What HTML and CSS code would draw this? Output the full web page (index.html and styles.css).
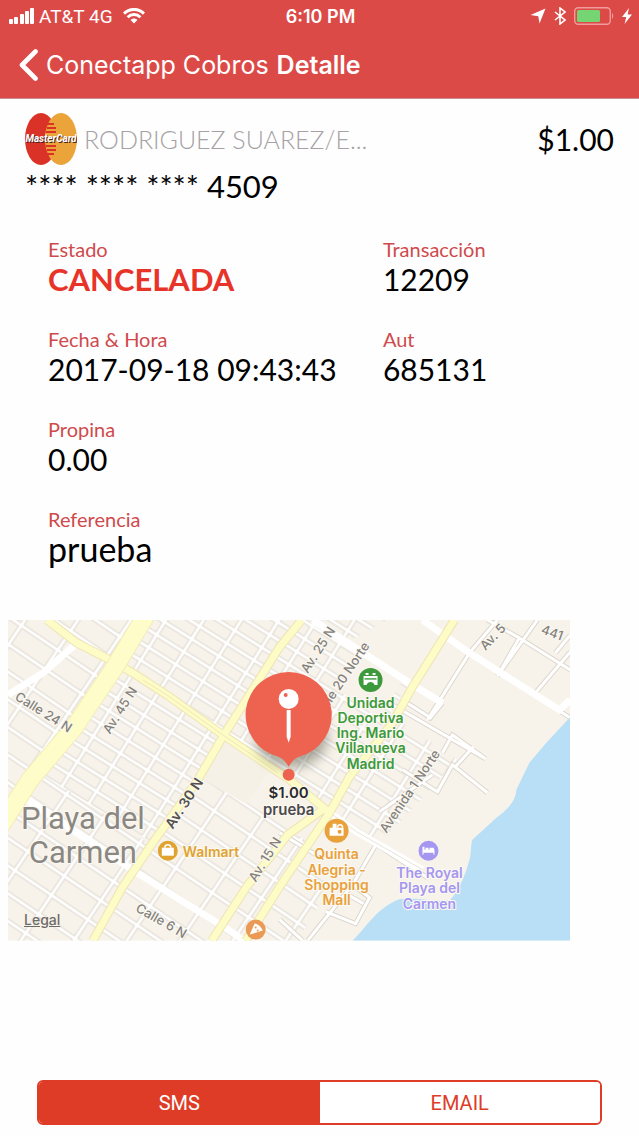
FILE: index.html
```
<!DOCTYPE html>
<html lang="es">
<head>
    <meta charset="UTF-8">
    <meta name="viewport" content="width=device-width, initial-scale=1.0">
    <title>Detalle</title>
    <link rel="stylesheet" href="styles.css">
</head>
<body>
    <header class="header">
        <!-- Status bar -->
        <div class="status-bar">
            <div class="status-left">
                <svg width="26" height="16" viewBox="0 0 26 16" fill="#fff">
                    <rect x="0" y="11" width="4" height="5" rx="1"/>
                    <rect x="5" y="9" width="4" height="7" rx="1"/>
                    <rect x="11" y="6" width="4" height="10" rx="1"/>
                    <rect x="16" y="3" width="4" height="13" rx="1"/>
                    <rect x="21" y="0" width="4" height="16" rx="1"/>
                </svg>
                <span class="carrier">AT&amp;T 4G</span>
                <svg width="22" height="16" viewBox="0 0 22 16" fill="none" stroke="#fff" stroke-width="3">
                    <path d="M1 5.6C6.6 0 15.4 0 21 5.6"/>
                    <path d="M4.6 9.2C8.2 5.6 13.8 5.6 17.4 9.2"/>
                    <path d="M7.6 12C9.5 10 12.5 10 14.4 12L11 15.6Z" fill="#fff" stroke="none"/>
                </svg>
            </div>
            <span class="time">6:10 PM</span>
            <div class="status-right">
                <svg width="16" height="16" viewBox="0 0 16 16" fill="#fff">
                    <path d="M15.5 0.5L9.5 15.5L8.3 8.2L0.5 7Z"/>
                </svg>
                <svg width="12" height="18" viewBox="0 0 12 18" fill="none" stroke="#fff" stroke-width="1.6">
                    <path d="M1 5L11 13L6 17V1L11 5L1 13"/>
                </svg>
                <svg width="40" height="18" viewBox="0 0 40 18">
                    <rect x="0.7" y="0.7" width="35.6" height="16.6" rx="3.5" fill="none" stroke="#f09c9a" stroke-width="1.4"/>
                    <rect x="3" y="3" width="23" height="12" rx="1.5" fill="#75d572"/>
                    <path d="M38 6C39.6 7 39.6 11 38 12Z" fill="#f09c9a"/>
                </svg>
                <svg width="10" height="16" viewBox="0 0 10 16" fill="#fff">
                    <path d="M7 0L0 9H4.2L2.6 16L10 6.4H5.6Z"/>
                </svg>
            </div>
        </div>
        <!-- Navigation -->
        <nav class="nav-bar">
            <a href="#" class="back">
                <svg width="20" height="34" viewBox="0 0 20 34" fill="none" stroke="#fff" stroke-width="4.6" stroke-linecap="round" stroke-linejoin="round">
                    <path d="M16.5 3.5L3 17L16.5 30.5"/>
                </svg>
                <span>Conectapp Cobros</span>
            </a>
            <h1>Detalle</h1>
        </nav>
    </header>

    <main class="content">
        <section class="card-info">
            <div class="card-row">
                <svg class="card-logo" width="52" height="54" viewBox="0 0 52 54">
                    <ellipse cx="16" cy="27" rx="16" ry="26" fill="#da3226"/>
                    <ellipse cx="36" cy="27" rx="16" ry="26" fill="#eaa43a"/>
                    <path d="M21 12H29M22 16H31M21 20H31M21 34H31M22 38H31M21 42H29" stroke="#da3226" stroke-width="2"/>
                    <path d="M26 14H23M26 18H22M26 36H22M26 40H23" stroke="#eaa43a" stroke-width="1"/>
                    <text class="logo-text" x="26" y="30" text-anchor="middle">MasterCard</text>
                </svg>
                <span class="holder">RODRIGUEZ SUAREZ/E...</span>
                <span class="amount">$1.00</span>
            </div>
            <p class="card-number">**** **** **** 4509</p>
        </section>

        <dl class="details">
            <div class="detail">
                <dt>Estado</dt>
                <dd class="cancelled">CANCELADA</dd>
            </div>
            <div class="detail">
                <dt>Transacción</dt>
                <dd>12209</dd>
            </div>
            <div class="detail">
                <dt>Fecha &amp; Hora</dt>
                <dd>2017-09-18 09:43:43</dd>
            </div>
            <div class="detail">
                <dt>Aut</dt>
                <dd>685131</dd>
            </div>
            <div class="detail full">
                <dt>Propina</dt>
                <dd>0.00</dd>
            </div>
            <div class="detail full">
                <dt>Referencia</dt>
                <dd class="reference">prueba</dd>
            </div>
        </dl>

        <!-- Map -->
        <div class="map">
            <svg class="map-svg" viewBox="0 0 563 321">
                <defs>
                    <pattern id="blocks" width="32" height="15" patternUnits="userSpaceOnUse" patternTransform="translate(125 53) rotate(32)">
                        <path d="M0 0H32M0 0V15M32 0V15M0 15H32" stroke="#ddd7cd" stroke-width="5"/>
                        <path d="M0 0H32M0 0V15M32 0V15M0 15H32" stroke="#fff" stroke-width="3"/>
                    </pattern>
                    <pattern id="bigBlocks" width="44" height="23" patternUnits="userSpaceOnUse" patternTransform="translate(22 150) rotate(34)">
                        <path d="M0 0H44M0 0V23M44 0V23M0 23H44" stroke="#ddd7cd" stroke-width="5"/>
                        <path d="M0 0H44M0 0V23M44 0V23M0 23H44" stroke="#fff" stroke-width="3"/>
                    </pattern>
                    <filter id="soft" x="-50%" y="-50%" width="200%" height="200%">
                        <feGaussianBlur stdDeviation="6"/>
                    </filter>
                </defs>

                <rect width="563" height="321" fill="#f7f3eb"/>

                <!-- street grid -->
                <path d="M139 0H294L215 117L125 53L107 47Z" fill="url(#blocks)"/>
                <path d="M107 47L215 117L190 160L145 223L22 150Z" fill="url(#blocks)"/>
                <path d="M29 150L140 223L85 321H0V195Z" fill="url(#bigBlocks)"/>
                <path d="M294 0H305L402 63L342 157L322 193L215 117Z" fill="url(#blocks)"/>
                <path d="M0 0H139L107 47L22 160L0 195Z" fill="url(#bigBlocks)"/>
                <path d="M190 150L300 222L238 321H85L145 223Z" fill="url(#bigBlocks)"/>
                <path d="M385 96L450 140L372 224L322 193Z" fill="url(#blocks)"/>
                <path d="M305 0H380L340 22Z" fill="url(#blocks)"/>
                <path d="M300 228L282 260L238 321H290L320 270Z" fill="url(#bigBlocks)"/>
                <path d="M217 122L262 152L238 184L193 158Z" fill="#f6f1e7"/>
                <path d="M318 4L396 59L372 99L330 70L352 30Z" fill="#f7f3eb"/>

                <g class="street-edge">
                    <path id="streets" d="M462 33L420 100M462 33L490 0M439 17L563 98M490 56L512 18L563 50M512 18L480 0M528 73L563 32M548 33L563 15M530 0L490 56M385 85L478 139M435 83L423 98L395 80M435 133L445 115L478 139M447 148L466 127M372 192L425 155M395 150L430 172L445 145L480 173M349 212L420 258M369 224L345 265L300 321M345 265L362 278L348 304L318 292M340 275L356 284M272 213L310 236M272 300L295 321"/>
                </g>
                <use href="#streets" class="street"/>

                <path class="white-road" d="M305 0L402 63L435 83M415 0L439 17L462 33L552 90L563 80M0 75L35 53L69 23M12 176L75 217L129 253L225 313L236 321M322 193L349 212L415 250"/>
                <path d="M322 193L349 212L415 250" fill="none" stroke="#e8e2da"/>

                <!-- avenues -->
                <g class="avenue-edge">
                    <path id="avenues" d="M39 0L69 23L102 40L125 53L159 75L215 115L282 160L322 193M294 0L272 27L215 117L190 160L145 223L115 267L85 321M447 0L405 67L385 103L342 157L322 193L299 227L272 267L238 321M315 190L280 215L239 267L204 321"/>
                </g>
                <use href="#avenues" class="avenue"/>
                <path d="M139 -6L107 47L66 108L22 160L-8 207" fill="none" stroke="#f3ecb8" stroke-width="19"/>
                <path d="M139 -6L107 47L66 108L22 160L-8 207" fill="none" stroke="#fefdc9" stroke-width="17"/>
                <path d="M135 60L159 75L215 115L270 153" fill="none" stroke="#f0e7b5"/>

                <!-- sea -->
                <path d="M563 97L539 123L522 143L509 170C508 185 495 193 489 198L465 220C463 225 464 235 462 240C458 255 452 270 443 280C425 284 398 274 386 282C368 291 358 308 345 321H563Z" fill="#b8dff5"/>

                <!-- street names -->
                <g class="street-name">
                    <text transform="translate(6 79) rotate(32)">Calle 24 N</text>
                    <text transform="translate(102 115) rotate(-58)">Av. 45 N</text>
                    <text transform="translate(300 54) rotate(-57)">Av. 25 N</text>
                    <text transform="translate(322 86) rotate(-56)">lle 20 Norte</text>
                    <text transform="translate(478 31) rotate(-46)">Av. 5</text>
                    <text transform="translate(533 13) rotate(20)">441</text>
                    <text transform="translate(379 214) rotate(-56)">Avenida 1 Norte</text>
                    <text transform="translate(248 263) rotate(-58)">Av. 15 N</text>
                    <text transform="translate(127 291) rotate(30)">Calle 6 N</text>
                    <text class="strong" transform="translate(165 210) rotate(-57)">Av. 30 N</text>
                </g>

                <text class="city" x="75" y="209" text-anchor="middle">Playa del</text>
                <text class="city" x="75" y="243" text-anchor="middle">Carmen</text>

                <!-- places -->
                <g class="place sport" text-anchor="middle">
                    <circle cx="363" cy="60" r="12"/>
                    <path d="M356 56H370V65H367C366 61 360 61 359 65H356ZM358 53H361V55H358ZM365 53H368V55H365Z" fill="#fff"/>
                    <path d="M357 59H369" stroke="#43a047" stroke-width="1.5"/>
                    <text x="363" y="88">Unidad</text>
                    <text x="363" y="103">Deportiva</text>
                    <text x="363" y="118">Ing. Mario</text>
                    <text x="363" y="133">Villanueva</text>
                    <text x="363" y="149">Madrid</text>
                </g>
                <g class="place shop">
                    <circle cx="160" cy="231" r="10"/>
                    <path d="M154 228H166V236H154Z" fill="#fff"/>
                    <path d="M157 228C157 224 163 224 163 228" fill="none" stroke="#fff" stroke-width="1.5"/>
                    <text x="175" y="237">Walmart</text>
                </g>
                <g class="place mall" text-anchor="middle">
                    <circle cx="329" cy="211" r="12"/>
                    <path d="M322 208H336V216H322ZM325 208V204H329V208" fill="#fff"/>
                    <path d="M330 208C330 204 335 204 335 208" fill="none" stroke="#fff" stroke-width="1.5"/>
                    <circle cx="332" cy="212" r="2"/>
                    <text x="329" y="239">Quinta</text>
                    <text x="329" y="255">Alegria -</text>
                    <text x="329" y="270">Shopping</text>
                    <text x="329" y="285">Mall</text>
                </g>
                <g class="place hotel" text-anchor="middle">
                    <circle cx="421" cy="231" r="10"/>
                    <path d="M415 227H417V230H427V235H426V233H416V235H415ZM418 228H421V230H418ZM422 228H426L427 230H422Z" fill="#fff"/>
                    <text x="422" y="258">The Royal</text>
                    <text x="422" y="273">Playa del</text>
                    <text x="422" y="289">Carmen</text>
                </g>
                <g class="place food">
                    <circle cx="248" cy="310" r="10"/>
                    <path d="M242 315L247 304C250 304 254 308 255 311Z" fill="#fff"/>
                    <circle cx="248" cy="308" r="1"/>
                    <circle cx="250" cy="311" r="1"/>
                </g>

                <!-- pin -->
                <ellipse cx="284" cy="118" rx="36" ry="30" fill="#50503c" opacity="0.45" filter="url(#soft)"/>
                <path d="M281 52A43 43 0 0 1 292 136.600C287 138 284 142 281 147C278 142 275 138 270 136.600A43 43 0 0 1 281 52Z" fill="#ed6350"/>
                <circle cx="281" cy="79" r="10" fill="#fff"/>
                <circle cx="278" cy="75" r="2" fill="#ed6350"/>
                <path d="M279 90H283V117L281 123L279 117Z" fill="#fff"/>
                <circle cx="281" cy="155" r="6" fill="#ed6350"/>
                <text class="pin-label" x="281" y="178" text-anchor="middle">$1.00</text>
                <text class="pin-label pin-sub" x="281" y="195" text-anchor="middle">prueba</text>
            </svg>
            <a href="#" class="legal">Legal</a>
        </div>
    </main>

    <footer class="actions">
        <button type="button" class="active">SMS</button>
        <button type="button">EMAIL</button>
    </footer>
</body>
</html>
```
FILE: styles.css
```
* {
    box-sizing: border-box;
}
body {
    margin: 0;
    min-height: 100vh;
    display: flex;
    flex-direction: column;
    background-color: #fefefe;
    color: #000;
    font-family: Lato, sans-serif;
}
svg {
    display: block;
}

/* Header */
.header {
    background-color: #dc4a48;
    color: #fff;
    font-family: Inter, sans-serif;
    border-bottom: 1px solid #c98a90;
}
.status-bar {
    display: grid;
    grid-template-columns: 1fr auto 1fr;
    align-items: center;
    height: 32px;
    padding: 0 7px 0 9px;
}
.status-left, .status-right {
    display: flex;
    align-items: center;
    gap: 4px;
}
.status-left svg:last-child {
    margin-left: 6px;
}
.status-right {
    justify-content: flex-end;
    gap: 8px;
}
.carrier {
    font-family: Roboto, sans-serif;
    font-size: 19px;
}
.time {
    font-size: 18px;
    font-weight: 600;
}
.nav-bar {
    display: flex;
    align-items: center;
    gap: 8px;
    height: 66px;
    padding-left: 19px;
}
.back {
    display: flex;
    align-items: center;
    gap: 7px;
    color: #fff;
    font-size: 25px;
    text-decoration: none;
}
h1 {
    margin: 0;
    font-size: 25px;
    font-weight: 600;
}

/* Card */
.card-info {
    padding: 13px 25px 0;
}
.card-row {
    display: flex;
    align-items: center;
    gap: 7px;
}
.logo-text {
    font-family: Roboto, sans-serif;
    font-size: 10px;
    font-weight: 700;
    font-style: italic;
    fill: #fff;
    text-shadow: 1px 1px 0 #4a2320;
}
.holder {
    color: #a5a1a4;
    font-size: 25px;
    font-weight: 300;
}
.amount {
    margin-left: auto;
    font-size: 30px;
}
.card-number {
    margin: 0;
    font-size: 31px;
    line-height: 40px;
}

/* Details */
.details {
    display: grid;
    grid-template-columns: 17fr 13fr;
    row-gap: 32px;
    margin: 32px 0 0;
    padding-left: 48px;
}
.full {
    grid-column: 1 / -1;
}
dt {
    color: #cf4a4c;
    font-size: 20px;
    line-height: 22px;
}
dd {
    margin: 0;
    font-size: 30px;
    line-height: 38px;
}
.detail + .detail {
    min-width: 0;
}
.cancelled {
    color: #e83428;
    font-size: 31px;
    font-weight: 700;
}
.reference {
    font-size: 34px;
}

/* Map */
.map {
    position: relative;
    width: 88%;
    margin: 52px 8px 24px;
    font-family: Inter, sans-serif;
}
.details {
    row-gap: 30px;
}
.map-svg {
    width: 100%;
    height: auto;
}
.street-edge, .avenue-edge, .street, .avenue, .white-road {
    fill: none;
}
.street-edge {
    stroke: #ddd7cd;
    stroke-width: 5;
}
.street {
    stroke: #fff;
    stroke-width: 3;
}
.white-road {
    stroke: #fff;
    stroke-width: 7;
}
.avenue-edge {
    stroke: #eee4b4;
    stroke-width: 9;
}
.avenue {
    stroke: #fdfbc6;
    stroke-width: 7;
}
.map text {
    stroke: #fbf9f2;
    stroke-width: 2px;
    paint-order: stroke;
    font-size: 14px;
    font-weight: 600;
}
.map .street-name text {
    fill: #85817c;
    font-size: 13px;
    font-weight: 500;
}
.map .street-name .strong {
    fill: #55514c;
    font-size: 14px;
    font-weight: 600;
}
.map .city {
    fill: #8b8782;
    font-family: Roboto, sans-serif;
    font-size: 31px;
    font-weight: 400;
}
.sport {
    fill: #3d9a3c;
}
.shop {
    fill: #e0a330;
}
.mall {
    fill: #e9a13c;
}
.hotel {
    fill: #a596f0;
}
.food {
    fill: #eb9a55;
}
.map .pin-label {
    fill: #2b2a2c;
    font-size: 15px;
}
.map .pin-sub {
    fill: #4b494c;
}
.legal {
    position: absolute;
    left: 16px;
    bottom: 13px;
    color: #6f6b66;
    font-size: 14px;
    font-weight: 500;
}

/* Buttons */
.actions {
    display: flex;
    height: 45px;
    margin: auto 37px 11px;
    border: 2px solid #de3c26;
    border-radius: 6px;
    overflow: hidden;
}
.actions button {
    flex: 1;
    padding: 0;
    border: none;
    background-color: #fff;
    color: #de3c26;
    font-family: Roboto, sans-serif;
    font-size: 20px;
    cursor: pointer;
}
.actions .active {
    background-color: #de3c26;
    color: #fff;
}
```
